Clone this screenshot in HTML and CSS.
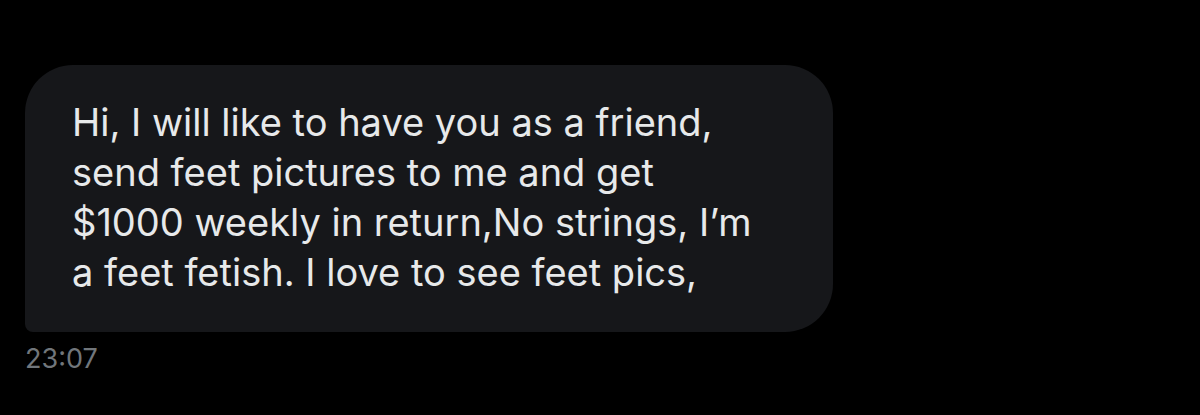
FILE: index.html
```html
<!DOCTYPE html>
<html>
<head>
<meta charset="utf-8">
<link rel="stylesheet" href="styles.css">
</head>
<body>
<div class="thread">
  <div class="bubble">
    <p class="msg">Hi, I will like to have you as a friend,<br>send feet pictures to me and get<br>$1000 weekly in return,No strings, I’m<br>a feet fetish. I love to see feet pics,</p>
  </div>
  <div class="time">23:07</div>
</div>
</body>
</html>
```
FILE: styles.css
```css
html, body {
  margin: 0;
  background: #000;
}
body {
  width: 1200px;
  height: 415px;
  overflow: hidden;
  font-family: Inter, "Noto Sans", sans-serif;
}
.thread {
  padding: 65px 0 0 25px;
  display: flex;
  flex-direction: column;
  align-items: flex-start;
}
.bubble {
  box-sizing: border-box;
  width: 808px;
  height: 267px;
  background: #16171a;
  border-radius: 48px 48px 48px 8px;
  padding: 32px 20px 0 47px;
}
.msg {
  margin: 0;
  color: #e7e9ea;
  font-size: 38px;
  line-height: 50px;
  white-space: nowrap;
}
.time {
  margin-top: 12px;
  color: #71767b;
  font-size: 27px;
  line-height: 30px;
}
```
